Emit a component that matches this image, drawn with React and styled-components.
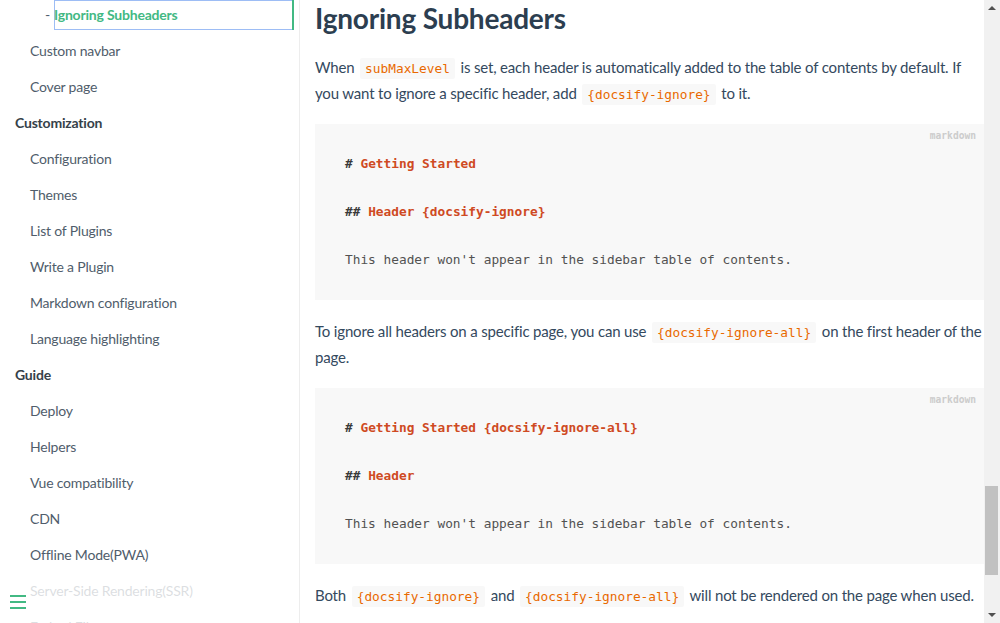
import React from "react";
import styled, { createGlobalStyle } from "styled-components";

const Global = createGlobalStyle`
  html, body { margin: 0; padding: 0; background: #fff; }
  body { font-family: Lato, "Noto Sans", sans-serif; -webkit-font-smoothing: antialiased; }
  #root { height: 623px; }
`;

const Page = styled.div`
  display: flex;
  width: 1000px;
  height: 623px;
  overflow: hidden;
`;

const Sidebar = styled.aside`
  position: relative;
  width: 300px;
  flex: 0 0 300px;
  box-sizing: border-box;
  border-right: 1px solid rgba(0, 0, 0, 0.07);
  padding-right: 5px;
  overflow: hidden;
  font-size: 14px;
  letter-spacing: -0.2px;
  color: #505d6b;
`;

const NavList = styled.ul`
  list-style: none;
  margin: 0;
  padding: 0 0 0 15px;
`;

const Row = styled.li`
  height: 30px;
  line-height: 30px;
  margin-bottom: 6px;
  white-space: nowrap;
  padding-left: ${(p) => (p.$group ? 0 : 15)}px;
  font-weight: ${(p) => (p.$group ? 700 : 400)};
  color: ${(p) => (p.$group ? "#364149" : "#505d6b")};
`;

const SubRow = styled.li`
  display: flex;
  height: 30px;
  line-height: 30px;
  margin-bottom: 6px;
  padding-left: 30px;
  white-space: nowrap;
`;

const Dash = styled.span`
  width: 9px;
  flex: 0 0 9px;
  color: #505d6b;
`;

const ActiveLink = styled.a`
  flex: 1;
  display: block;
  box-sizing: border-box;
  height: 30px;
  color: #42b983;
  font-weight: 700;
  text-decoration: none;
  border-right: 2px solid #42b983;
  box-shadow: inset 1px 1px 0 #9dbdf5, inset 0 -1px 0 #9dbdf5;
`;

const Toggle = styled.div`
  position: absolute;
  left: 0;
  bottom: 0;
  width: 284px;
  padding: 14px 10px;
  background: rgba(255, 255, 255, 0.8);
  display: flex;
  flex-direction: column;
  gap: 4px;
`;

const Bar = styled.span`
  display: block;
  width: 16px;
  height: 2px;
  background: #42b983;
`;

const Main = styled.main`
  flex: 1;
  min-width: 0;
  padding-left: 15px;
  overflow: hidden;
  color: #34495e;
`;

const Title = styled.h2`
  margin: 0 0 18px;
  font-size: 28px;
  line-height: 36px;
  font-weight: 700;
  letter-spacing: -0.2px;
  color: #2c3e50;
`;

const Para = styled.p`
  margin: 0 0 18px;
  font-size: 15px;
  line-height: 26px;
  letter-spacing: -0.17px;
`;

const Code = styled.code`
  font-family: "DejaVu Sans Mono", "Liberation Mono", monospace;
  font-size: 12.8px;
  line-height: 14px;
  letter-spacing: 0;
  color: #e96900;
  background: #f8f8f8;
  padding: 3px 5px;
  margin: 0 2px;
  border-radius: 2px;
  white-space: pre;
`;

const Pre = styled.pre`
  position: relative;
  margin: 0 0 18px;
  padding: 28px 30px;
  background: #f8f8f8;
  font-family: "DejaVu Sans Mono", "Liberation Mono", monospace;
  font-size: 12.8px;
  line-height: 24px;
  color: #525252;
  overflow: hidden;
`;

const Lang = styled.span`
  position: absolute;
  top: 6px;
  right: 8px;
  font-size: 9.6px;
  line-height: 12px;
  font-weight: 600;
  color: #ccc;
`;

const Punct = styled.span`
  color: #3a3a3a;
  font-weight: 700;
`;

const TitleTok = styled.span`
  color: #cf4a23;
  font-weight: 700;
`;

const ScrollBar = styled.div`
  width: 16px;
  flex: 0 0 16px;
  background: #f1f1f1;
  display: flex;
  flex-direction: column;
`;

const Arrow = styled.div`
  height: 16px;
  display: flex;
  align-items: center;
  justify-content: center;
`;

const Track = styled.div`
  flex: 1;
  display: flex;
  flex-direction: column;
`;

const Thumb = styled.div`
  margin: 0 2px 0 1px;
  background: #c1c1c1;
`;

const Tri = ({ up }) => (
  <svg width="8" height="6" viewBox="0 0 8 6">
    <path d={up ? "M0 5 L4 1 L8 5 Z" : "M0 1 L8 1 L4 5 Z"} fill="#505050" />
  </svg>
);

const items = [
  { t: "Custom navbar" },
  { t: "Cover page" },
  { t: "Customization", g: true },
  { t: "Configuration" },
  { t: "Themes" },
  { t: "List of Plugins" },
  { t: "Write a Plugin" },
  { t: "Markdown configuration" },
  { t: "Language highlighting" },
  { t: "Guide", g: true },
  { t: "Deploy" },
  { t: "Helpers" },
  { t: "Vue compatibility" },
  { t: "CDN" },
  { t: "Offline Mode(PWA)" },
  { t: "Server-Side Rendering(SSR)" },
  { t: "Embed Files" },
];

export default function App() {
  return (
    <>
      <Global />
      <Page>
        <Sidebar>
          <NavList>
            <SubRow>
              <Dash>-</Dash>
              <ActiveLink>Ignoring Subheaders</ActiveLink>
            </SubRow>
            {items.map((it) => (
              <Row key={it.t} $group={it.g}>
                {it.t}
              </Row>
            ))}
          </NavList>
          <Toggle>
            <Bar />
            <Bar />
            <Bar />
          </Toggle>
        </Sidebar>
        <Main>
          <Title>Ignoring Subheaders</Title>
          <Para>
            When <Code>subMaxLevel</Code> is set, each header is automatically added to the table of contents by
            default. If you want to ignore a specific header, add <Code>{"{docsify-ignore}"}</Code> to it.
          </Para>
          <Pre>
            <Lang>markdown</Lang>
            <Punct>#</Punct> <TitleTok>Getting Started</TitleTok>
            {"\n\n"}
            <Punct>##</Punct> <TitleTok>Header {"{docsify-ignore}"}</TitleTok>
            {"\n\nThis header won't appear in the sidebar table of contents."}
          </Pre>
          <Para>
            To ignore all headers on a specific page, you can use <Code>{"{docsify-ignore-all}"}</Code> on the first
            header of the page.
          </Para>
          <Pre>
            <Lang>markdown</Lang>
            <Punct>#</Punct> <TitleTok>Getting Started {"{docsify-ignore-all}"}</TitleTok>
            {"\n\n"}
            <Punct>##</Punct> <TitleTok>Header</TitleTok>
            {"\n\nThis header won't appear in the sidebar table of contents."}
          </Pre>
          <Para>
            Both <Code>{"{docsify-ignore}"}</Code> and <Code>{"{docsify-ignore-all}"}</Code> will not be rendered on
            the page when used.
          </Para>
        </Main>
        <ScrollBar>
          <Arrow>
            <Tri up />
          </Arrow>
          <Track>
            <Thumb style={{ marginTop: 470, height: 89 }} />
          </Track>
          <Arrow>
            <Tri />
          </Arrow>
        </ScrollBar>
      </Page>
    </>
  );
}
